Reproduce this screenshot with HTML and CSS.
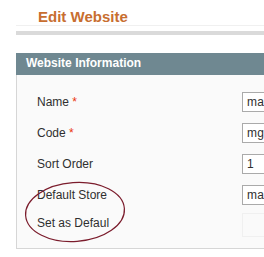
FILE: index.html
```html
<!DOCTYPE html>
<html lang="en">
<head>
    <meta charset="UTF-8">
    <title>Edit Website</title>
    <link rel="stylesheet" href="styles.css">
</head>
<body>
    <div class="content-header">
        <h3>Edit Website</h3>
    </div>
    <div class="header-bar"></div>

    <div class="entry-edit">
        <div class="entry-head">
            <h4>Website Information</h4>
        </div>
        <div class="fieldset">
            <div class="form-row">
                <label>Name <span class="required">*</span></label>
                <input type="text" value="main_website">
            </div>
            <div class="form-row">
                <label>Code <span class="required">*</span></label>
                <input type="text" value="mgt_website">
            </div>
            <div class="form-row">
                <label>Sort Order</label>
                <input type="text" value="1">
            </div>
            <div class="form-row">
                <label>Default Store</label>
                <input type="text" value="main_store">
            </div>
            <div class="form-row">
                <label>Set as Defaul</label>
                <div class="faint-box"></div>
            </div>
        </div>
    </div>

    <!-- red circle drawn over the screenshot -->
    <svg class="mark" width="264" height="257" viewBox="0 0 264 257">
        <ellipse cx="75" cy="212" rx="49.5" ry="29.5" transform="rotate(-4 75 212)"
                 fill="none" stroke="#7b1c2c" stroke-width="1.2"/>
    </svg>
</body>
</html>
```

FILE: styles.css
```css
html, body {
    margin: 0;
    padding: 0;
    overflow: hidden;
}
body {
    font-family: "Liberation Sans", Arial, sans-serif;
    font-size: 12px;
    color: #2f2f2f;
    background: #fff;
    position: relative;
    width: 264px;
    height: 257px;
}
.content-header {
    margin-left: 16px;
    height: 25px;
    border-bottom: 1px solid #f0f0f0;
}
.content-header h3 {
    margin: 0;
    padding: 8px 0 0 22px;
    font-size: 15px;
    line-height: 17px;
    font-weight: bold;
    color: #c86e30;
}
.header-bar {
    margin: 5px 0 0 16px;
    height: 4px;
    background: #dadada;
}
.entry-edit {
    margin: 18px 0 0 16px;
}
.entry-head {
    height: 22px;
    background: #6f8891;
    padding-left: 10px;
}
.entry-head h4 {
    margin: 0;
    font-size: 12px;
    line-height: 20px;
    font-weight: bold;
    color: #fff;
}
.fieldset {
    background: #fafafa;
    border-left: 1px solid #d6d6d6;
    border-bottom: 1px solid #d6d6d6;
    padding: 17px 0 12px 20px;
    overflow: hidden;
}
.form-row {
    display: flex;
    align-items: baseline;
    height: 20px;
    margin-bottom: 11px;
}
.form-row:last-child {
    margin-bottom: 0;
}
.form-row label {
    flex: none;
    width: 205px;
    white-space: nowrap;
}
.required {
    color: #eb340a;
}
.form-row input {
    flex: none;
    box-sizing: border-box;
    width: 120px;
    height: 20px;
    padding: 0 4px;
    border: 1px solid #aaa;
    background: #fff;
    font-family: "Liberation Sans", Arial, sans-serif;
    font-size: 12px;
    letter-spacing: 0.3px;
    color: #2f2f2f;
}
.faint-box {
    flex: none;
    align-self: flex-start;
    margin-top: -3px;
    width: 120px;
    height: 22px;
    border: 1px solid #f0f0f0;
}
.mark {
    position: absolute;
    left: 0;
    top: 0;
    pointer-events: none;
}
```
